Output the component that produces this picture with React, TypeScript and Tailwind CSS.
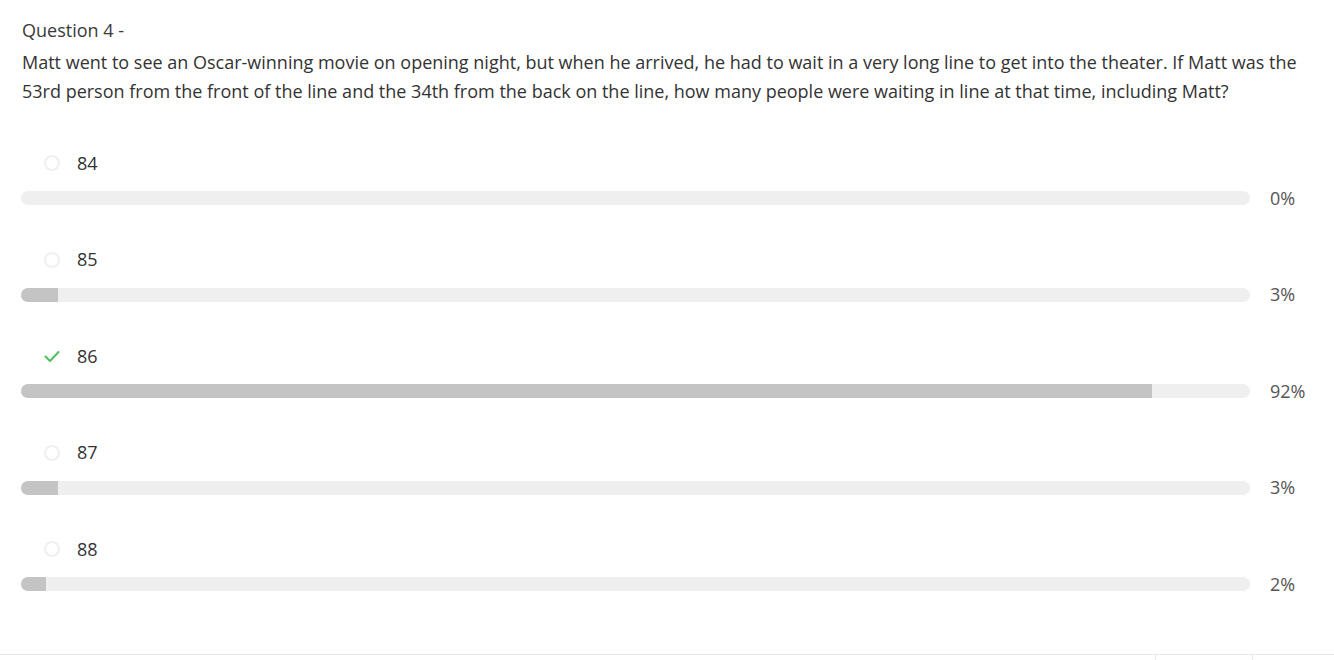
import React from "react";

const options = [
  { label: "84", pct: 0, correct: false },
  { label: "85", pct: 3, correct: false },
  { label: "86", pct: 92, correct: true },
  { label: "87", pct: 3, correct: false },
  { label: "88", pct: 2, correct: false },
];

export default function App() {
  return (
    <div
      className="w-[1334px] h-[660px] bg-white overflow-hidden flex flex-col text-[#333333]"
      style={{ fontFamily: "'Open Sans', Lato, sans-serif" }}
    >
      <div className="pl-[22px] pt-[18px]">
        <div className="text-[18px] leading-[24px] text-[#3a3a3a]">Question 4 -</div>
        <p className="mt-[6px] w-[1300px] text-[18px] leading-[29px] text-[#333333]">
          Matt went to see an Oscar-winning movie on opening night, but when he arrived, he had to wait in a very long line to get into the theater. If Matt was the 53rd person from the front of the line and the 34th from the back on the line, how many people were waiting in line at that time, including Matt?
        </p>
      </div>
      <div className="pl-[21px] mt-[45px] flex flex-col gap-[37.5px]">
        {options.map((o) => (
          <div key={o.label} className="flex flex-col">
            <div className="flex items-center h-[24px]">
              <div className="w-[16px] h-[16px] ml-[23px] flex items-center justify-center">
                {o.correct ? (
                  <svg width="16" height="16" viewBox="0 0 16 16" fill="none">
                    <path d="M1.5 8.5 L6 13 L14.5 4" stroke="#4cc05f" strokeWidth="2" strokeLinecap="round" strokeLinejoin="round" />
                  </svg>
                ) : (
                  <div className="w-[16px] h-[16px] rounded-full border-2 border-[#efefef]" />
                )}
              </div>
              <span className="ml-[17px] text-[18px] text-[#333333]">{o.label}</span>
            </div>
            <div className="mt-[11px] flex items-center h-[24px]">
              <div className="w-[1229px] h-[14px] rounded-full bg-[#efefef] overflow-hidden flex">
                <div className="h-full bg-[#c4c4c4]" style={{ width: `${o.pct}%` }} />
              </div>
              <span className="ml-[20px] text-[18px] text-[#555555]">{o.pct}%</span>
            </div>
          </div>
        ))}
      </div>
      <div className="mt-auto h-[6px] border-t border-[#e8e8e8] flex">
        <div className="w-[1155px]" />
        <div className="w-[98px] border-l border-r border-[#e8e8e8]" />
      </div>
    </div>
  );
}
